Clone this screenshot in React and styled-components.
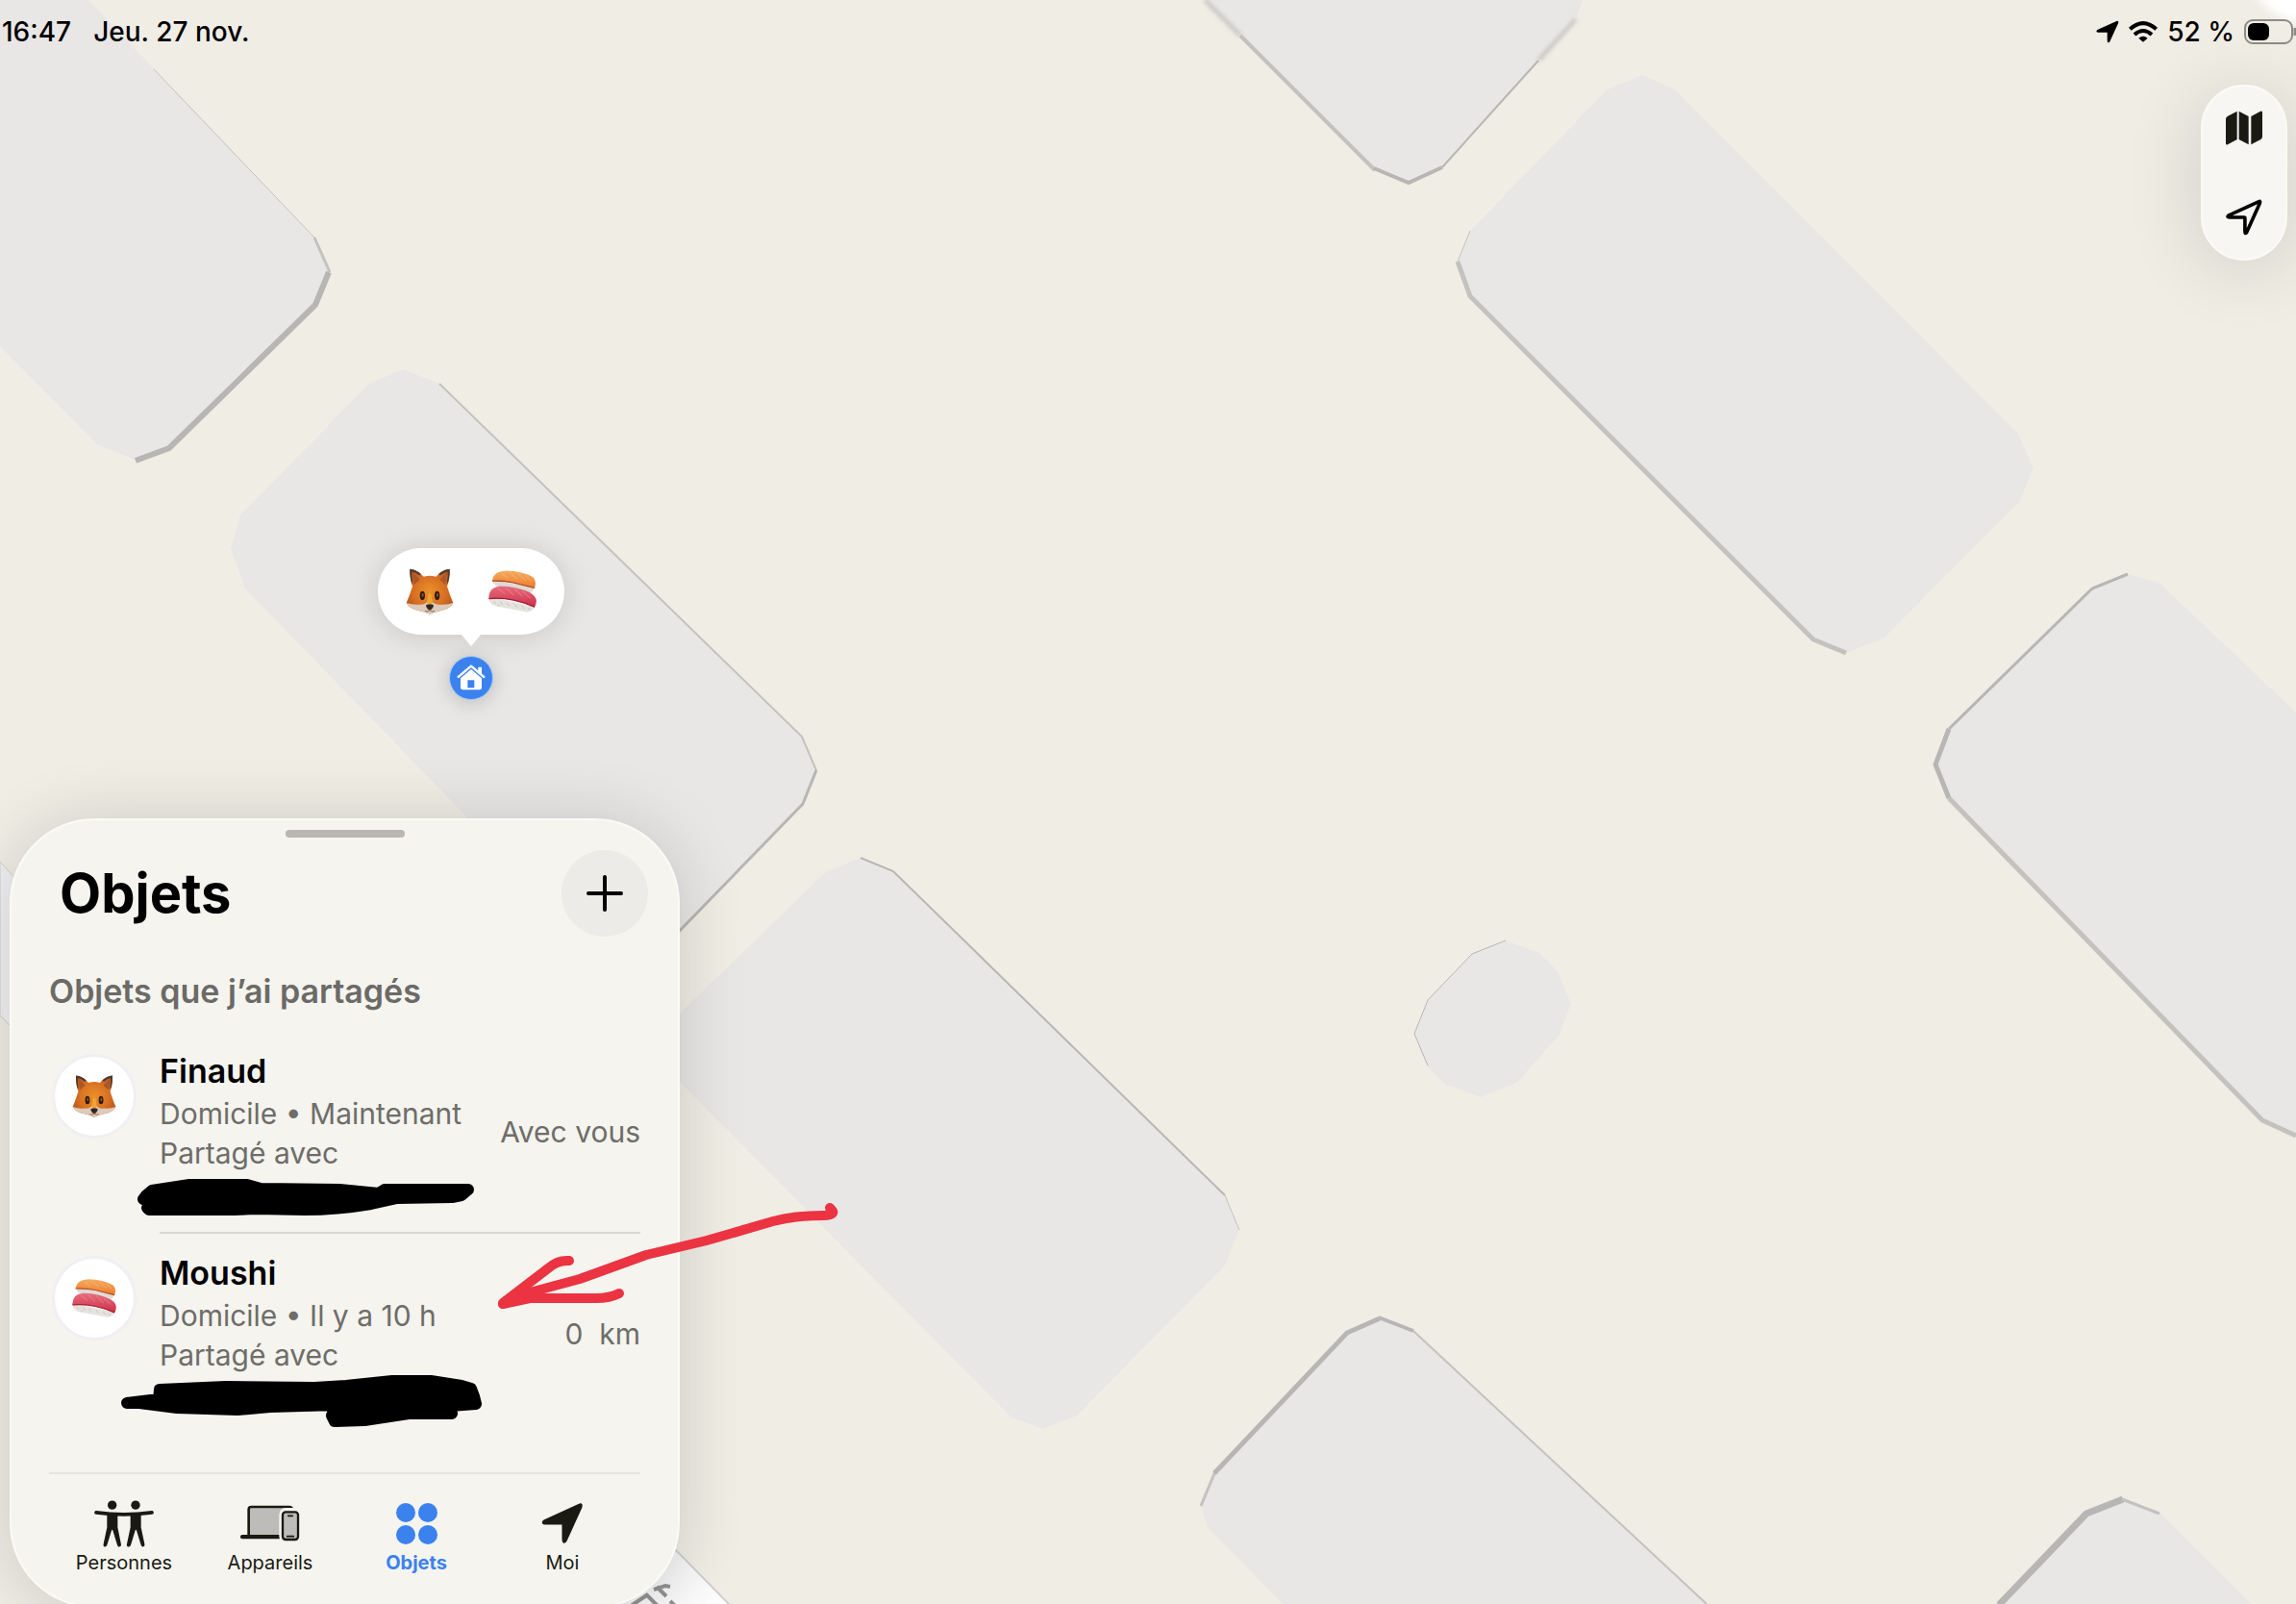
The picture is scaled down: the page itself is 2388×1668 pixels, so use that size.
import styled, { createGlobalStyle } from "styled-components"

const colors = {
    land: '#f0ede5',
    building: '#e8e7e6',
    sheet: '#f5f4ef',
    ink: '#1a1912',
    muted: '#6e6d69',
    blue: '#3b82ee',
    red: '#eb3342',
}

// each building: its footprint and the wall edges that show below the roof
const buildings = [
    {
        id: 'a',
        points: '0,0 92,0 327,247 343,285 328,316 176,465 142,479 102,463 0,360',
        walls: [
            { d: 'M160 72 L327 247', w: 1 },
            { d: 'M327 247 L343 283', w: 3 },
            { d: 'M342 283 L328 317 L176 466 L141 479', w: 6, dark: true },
        ],
    },
    {
        id: 'b',
        points: '419,384 457,399 834,766 849,801 834,837 660,1015 600,980 484,848 255,612 240,570 250,536 384,399',
        walls: [
            { d: 'M457 399 L834 766 L849 801', w: 2 },
            { d: 'M849 801 L835 836 L700 975', w: 3, dark: true },
        ],
    },
    {
        id: 'c',
        points: '895,892 929,906 1274,1243 1289,1279 1274,1316 1120,1472 1085,1486 1052,1474 690,1108 690,1070 860,906',
        walls: [
            { d: 'M895 892 L929 906 L1274 1243', w: 2, dark: true },
            { d: 'M1274 1243 L1289 1279', w: 1 },
        ],
    },
    {
        id: 'd',
        points: '1434,1370 1470,1384 1775,1668 1334,1668 1256,1588 1249,1566 1264,1530 1400,1385',
        walls: [
            { d: 'M1249 1566 L1264 1530', w: 3 },
            { d: 'M1263 1532 L1401 1386 L1435 1371', w: 5, dark: true },
            { d: 'M1434 1370 L1470 1384', w: 4, dark: true },
            { d: 'M1470 1384 L1775 1668', w: 2 },
        ],
    },
    {
        id: 'e',
        points: '1566,978 1601,991 1620,1010 1634,1044 1622,1076 1577,1126 1540,1141 1503,1127 1484,1108 1471,1075 1485,1040 1531,992',
        walls: [{ d: 'M1485 1108 L1471 1075 L1485 1040 L1531 992 L1566 978', w: 1, dark: true }],
    },
    {
        id: 'f',
        points: '1254,0 1430,175 1465,190 1500,173 1639,20 1646,0',
        walls: [
            { d: 'M1290 37 L1430 177', w: 4 },
            { d: 'M1429 175 L1465 190 L1500 174', w: 4, dark: true },
            { d: 'M1500 174 L1600 63', w: 2, dark: true },
        ],
        soft: 'M1253 0 L1290 37 M1600 63 L1639 20',
    },
    {
        id: 'g',
        points: '1708,78 1742,93 2099,451 2115,487 2100,522 1959,664 1920,679 1886,664 1529,307 1516,272 1529,240 1672,93',
        walls: [
            { d: 'M1529 240 L1516 272', w: 1 },
            { d: 'M1516 272 L1529 308 L1886 665 L1920 679', w: 5 },
        ],
    },
    {
        id: 'h',
        points: '2213,597 2246,606 2388,741 2388,1181 2353,1165 2027,830 2013,795 2027,758 2176,612',
        walls: [
            { d: 'M2213 597 L2176 612 L2027 758', w: 3, dark: true },
            { d: 'M2027 758 L2013 795 L2027 830', w: 5, dark: true },
            { d: 'M2027 830 L2353 1165 L2388 1181', w: 5 },
        ],
    },
    {
        id: 'i',
        points: '2207,1558 2246,1573 2341,1668 2079,1668 2169,1573',
        walls: [
            { d: 'M2079 1669 L2170 1574 L2208 1559', w: 7, dark: true },
            { d: 'M2207 1559 L2246 1574', w: 3 },
        ],
    },
]

const items = [
    { id: 1, name: 'Finaud', place: 'Domicile • Maintenant', shared: 'Partagé avec', distance: 'Avec vous', icon: 'fox' },
    { id: 2, name: 'Moushi', place: 'Domicile • Il y a 10 h', shared: 'Partagé avec', distance: '0  km', icon: 'sushi' },
]

const MapCanvas = () => (
    <Canvas viewBox="0 0 2388 1668" preserveAspectRatio="xMinYMin slice" aria-hidden="true">
        <defs>
            <linearGradient id="road" x1="0" y1="0" x2="1" y2="1">
                <stop offset="0" stopColor="#e4e4e7" />
                <stop offset="1" stopColor="#ffffff" />
            </linearGradient>
            <filter id="soft"><feGaussianBlur stdDeviation="4" /></filter>
            <filter id="softEdge"><feGaussianBlur stdDeviation="2" /></filter>
        </defs>
        <rect width="2388" height="1668" fill={colors.land} />
        {buildings.map(({ id, points, walls, soft }) => (
            <g key={id} fill="none" strokeLinejoin="miter">
                <polygon points={points} fill={colors.building} />
                {soft && <path d={soft} stroke="#c3c2bf" strokeWidth="4" filter="url(#softEdge)" />}
                {walls.map(({ d, w, dark }) => (
                    <path key={d} d={d} stroke={dark ? '#b7b6b4' : '#c3c2bf'} strokeWidth={w} />
                ))}
            </g>
        ))}
        <path d="M2344 -8 H2396 V24 Q2364 20 2344 -8Z" fill="#fff" filter="url(#soft)" />
        <path d="M0 896 L40 940 V1096 L0 1056Z" fill="#f1f1f3" stroke="#cfcfd0" />
        <path d="M640 1548 L760 1670 H600Z" fill="url(#road)" stroke="#cfcfd2" strokeWidth="2" />
        <g stroke="#929292" strokeWidth="4" fill="none">
            <path d="M656 1670 L674 1658" />
            <path d="M680 1653 L692 1649 L697 1650" />
            <path d="M672 1658 L684 1670" />
            <path d="M683 1650 L693 1660" />
            <path d="M697 1665 L702 1670" />
        </g>
    </Canvas>
)

const Fox = ({ size }) => (
    <svg width={size} height={size} viewBox="0 0 150 146" aria-hidden="true">
        <defs>
            <radialGradient id="fur" cx="50%" cy="50%" r="60%">
                <stop offset="0" stopColor="#ec9029" />
                <stop offset="0.6" stopColor="#d66f22" />
                <stop offset="1" stopColor="#b04f1a" />
            </radialGradient>
        </defs>
        <path d="M13 3 Q34 5 56 27 Q75 21 94 27 Q116 5 137 3 Q138 34 129 57 Q136 78 141 92 L148 109 Q140 126 112 132 Q92 136 75 144 Q58 136 38 132 Q10 126 2 109 L9 92 Q14 78 21 57 Q12 34 13 3Z" fill="url(#fur)" />
        <path d="M13 3 Q34 5 48 19 L42 23 Q30 12 19 11 Q17 25 21 39 L20 50 Q12 30 13 3Z" fill="#4a3a30" />
        <path d="M137 3 Q116 5 102 19 L108 23 Q120 12 131 11 Q133 25 129 39 L130 50 Q138 30 137 3Z" fill="#4a3a30" />
        <path d="M22 18 Q36 24 44 36 L26 52Z" fill="#a9562a" />
        <path d="M128 18 Q114 24 106 36 L124 52Z" fill="#a9562a" />
        <path d="M2 109 Q22 116 42 114 Q58 116 66 107 Q75 103 84 107 Q92 116 108 114 Q128 116 148 109 Q140 126 112 132 Q92 136 75 144 Q58 136 38 132 Q10 126 2 109Z" fill="#dccabb" />
        <path d="M66 107 L70 82 Q75 76 80 82 L84 107 L80 112 H70Z" fill="#eea532" />
        <ellipse cx="52" cy="86" rx="8" ry="14" fill="#33190d" />
        <ellipse cx="98" cy="86" rx="8" ry="14" fill="#33190d" />
        <ellipse cx="53" cy="84" rx="3" ry="6" fill="#7d5a46" />
        <ellipse cx="99" cy="84" rx="3" ry="6" fill="#7d5a46" />
        <path d="M63 116 Q75 110 87 116 Q86 128 75 132 Q64 128 63 116Z" fill="#372620" />
        <path d="M60 134 Q68 138 75 132 Q82 138 90 134" fill="none" stroke="#8a6b55" strokeWidth="3" />
    </svg>
)

const Sushi = ({ size }) => (
    <svg width={size} height={size} viewBox="0 -10 152 152" aria-hidden="true">
        <defs>
            <linearGradient id="salmon" x1="0" y1="0" x2="0" y2="1">
                <stop offset="0" stopColor="#f5aa60" />
                <stop offset="1" stopColor="#ea7d2c" />
            </linearGradient>
            <linearGradient id="tuna" x1="0" y1="0" x2="0" y2="1">
                <stop offset="0" stopColor="#e86c7c" />
                <stop offset="1" stopColor="#cb3049" />
            </linearGradient>
        </defs>
        <path d="M13 30 Q14 52 48 54 L125 72 Q142 70 145 54Z" fill="#dddbd5" />
        <path d="M12 30 Q18 2 56 1 Q108 2 142 22 Q153 34 146 55 Q112 46 78 38 Q42 32 12 34Z" fill="url(#salmon)" />
        <path d="M40 8 L62 25 M66 6 L92 27 M94 9 L118 32 M116 15 L136 34" stroke="#f8c088" strokeWidth="2" />
        <path d="M12 33 Q44 31 78 38 L146 55" fill="none" stroke="#b94a22" strokeWidth="4" />
        <path d="M3 84 Q-2 108 28 114 Q74 122 122 131 Q140 130 147 114Z" fill="#e4e3dd" />
        <path d="M1 86 Q2 52 38 49 Q92 50 132 70 Q155 84 151 102 Q149 113 145 116 Q116 102 80 94 Q42 86 1 90Z" fill="url(#tuna)" />
        <path d="M30 56 L52 74 M54 54 L80 78 M82 57 L108 82 M108 64 L132 88" stroke="#ef97a1" strokeWidth="2" />
        <path d="M2 89 Q42 85 80 94 Q116 102 146 115" fill="none" stroke="#a81f38" strokeWidth="4" />
        <path d="M16 98 L24 104 M38 98 L44 108 M58 102 L66 112 M82 106 L90 116 M106 112 L114 122 M30 108 L36 111 M126 118 L130 126" stroke="#c6c3ba" strokeWidth="3" />
    </svg>
)

const Emoji = ({ name, size }) => name === 'fox' ? <Fox size={size} /> : <Sushi size={size} />

const HomeIcon = () => (
    <svg width="30" height="28" viewBox="0 0 90 84" aria-hidden="true">
        <path d="M5 39 L45 5 L85 39" fill="none" stroke="#fff" strokeWidth="7" strokeLinecap="round" strokeLinejoin="round" />
        <path d="M67 8 H78 V32 L67 23Z" fill="#fff" />
        <path fillRule="evenodd" d="M45 15 L78 43 V72 Q78 79 71 79 H19 Q12 79 12 72 V43Z M34 49 V73 H55 V49Z" fill="#fff" />
    </svg>
)

const LocationIcon = ({ size, outline }) => (
    <svg width={size} height={size} viewBox="0 0 42 42" aria-hidden="true">
        <path
            d="M3 19 L38 3 Q40 2 39 5 L24 38 Q22 41 22 37 V22 Q22 21 21 21 H4 Q1 21 3 19Z"
            fill={outline ? 'none' : 'currentColor'}
            stroke="currentColor"
            strokeWidth={outline ? 4 : 3}
            strokeLinejoin="round"
        />
    </svg>
)

const WifiIcon = () => (
    <svg width="30" height="22" viewBox="0 0 90 66" aria-hidden="true">
        <path d="M4 25 Q45 -12 86 25" fill="none" stroke="#000" strokeWidth="12" />
        <path d="M18 42 Q45 18 72 42" fill="none" stroke="#000" strokeWidth="12" />
        <path d="M31 53 Q45 41 59 53 L45 65Z" fill="#000" />
    </svg>
)

const BatteryIcon = () => (
    <svg width="54" height="26" viewBox="0 0 54 26" aria-hidden="true">
        <rect x="1" y="1" width="49" height="24" rx="8" fill="none" stroke="#8c8b88" strokeWidth="2" />
        <rect x="4" y="4" width="22" height="18" rx="6" fill="#000" />
        <path d="M53 9 V17" stroke="#8c8b88" strokeWidth="3" />
    </svg>
)

const MapIcon = () => (
    <svg width="38" height="36" viewBox="0 0 114 106" fill={colors.ink} aria-hidden="true">
        <path d="M5 17 L35 1 V89 L6 105 Q0 107 0 101 V25 Q0 20 5 17Z" />
        <path d="M41 1 L71 17 V105 L41 89Z" />
        <path d="M79 17 L108 1 Q114 -1 114 5 V80 Q114 86 109 89 L79 105Z" />
    </svg>
)

const PeopleIcon = () => (
    <svg width="62" height="49" viewBox="0 0 186 146" fill={colors.ink} aria-hidden="true">
        <circle cx="56" cy="15" r="14" />
        <circle cx="129" cy="15" r="14" />
        <path d="M6 38 Q50 44 92 44 Q136 44 180 38" fill="none" stroke={colors.ink} strokeWidth="11" strokeLinecap="round" />
        <path d="M40 43 H73 V84 L84 138 Q84 146 76 145 Q73 144 72 140 L58 94 Q56 90 54 94 L40 140 Q38 146 32 145 Q27 143 29 136 L40 84Z" />
        <path d="M113 43 H146 V84 L157 136 Q159 143 153 145 Q148 146 146 140 L132 94 Q130 90 128 94 L114 140 Q112 146 106 145 Q100 144 102 136 L113 84Z" />
    </svg>
)

const DevicesIcon = () => (
    <svg width="62" height="38" viewBox="0 0 186 114" aria-hidden="true">
        <path d="M26 98 V14 Q26 6 34 6 H151 Q159 6 160 14 V98Z" fill="#bdbcb8" />
        <path d="M26 98 V14 Q26 6 34 6 H153 Q160 6 162 12" fill="none" stroke={colors.ink} strokeWidth="8" />
        <rect x="0" y="93" width="130" height="13" rx="6" fill={colors.ink} />
        <rect x="132" y="20" width="48" height="88" rx="10" fill="#bdbcb8" stroke={colors.sheet} strokeWidth="22" />
        <rect x="132" y="22" width="48" height="86" rx="9" fill="#bdbcb8" stroke={colors.ink} strokeWidth="7" />
        <path d="M149 34 H163 M146 98 H166" stroke={colors.ink} strokeWidth="5" strokeLinecap="round" />
    </svg>
)

const ItemsIcon = () => (
    <svg width="43" height="43" viewBox="0 0 43 43" fill={colors.blue} aria-hidden="true">
        <circle cx="10" cy="10" r="10" />
        <circle cx="33" cy="10" r="10" />
        <circle cx="10" cy="33" r="10" />
        <circle cx="33" cy="33" r="10" />
    </svg>
)

const PlusIcon = () => (
    <svg width="38" height="38" viewBox="0 0 38 38" aria-hidden="true">
        <path d="M19 2 V36 M2 19 H36" stroke="#000" strokeWidth="4" strokeLinecap="round" />
    </svg>
)

const tabs = [
    { id: 'people', title: 'Personnes', icon: <PeopleIcon /> },
    { id: 'devices', title: 'Appareils', icon: <DevicesIcon /> },
    { id: 'items', title: 'Objets', icon: <ItemsIcon />, active: true },
    { id: 'me', title: 'Moi', icon: <LocationIcon size={44} /> },
]

// hand-drawn markup that sits above everything
const Ink = () => (
    <InkLayer viewBox="0 0 2388 1668" preserveAspectRatio="xMinYMin slice" aria-hidden="true">
        <g stroke="#000" strokeWidth="12" strokeLinejoin="round">
            <path d="M158 1238 L197 1232 H257 L271 1236 L353 1237 L394 1241 L400 1237 H487 L480 1243 L470 1245 L413 1246 L386 1252 Q350 1258 317 1258 L266 1257 L243 1258 H155 L153 1256 L158 1250 L149 1247 L152 1243Z" />
            <path d="M132 1459 L165 1455 L166 1445 L235 1442 L327 1443 L360 1441 L408 1436 H448 L480 1441 L490 1444 L493 1452 L495 1460 L468 1462 L470 1470 H425 L379 1477 L348 1478 L345 1472 L350 1461 L281 1463 L247 1466 L184 1464 L145 1459Z" />
        </g>
        <g fill="none" stroke={colors.red} strokeWidth="10" strokeLinecap="round" strokeLinejoin="round">
            <path d="M863 1256 Q872 1264 856 1264 Q826 1264 804 1270 L735 1290 L672 1305 L603 1330 L551 1344 L523 1356" />
            <path d="M592 1311 Q580 1310 570 1319 L523 1355" />
            <path d="M644 1345 Q634 1350 620 1350 H551 L523 1356" />
        </g>
    </InkLayer>
)

const App = () => {
    return (
        <Screen>
            <GlobalStyle />
            <MapCanvas />
            <StatusBar>
                <StatusGroup $gap="23px">
                    <span>16:47</span>
                    <span>Jeu. 27 nov.</span>
                </StatusGroup>
                <StatusGroup $gap="10px">
                    <LocationIcon size={24} />
                    <WifiIcon />
                    <span>52 %</span>
                    <BatteryIcon />
                </StatusGroup>
            </StatusBar>
            <Pin>
                <Callout>
                    <Emoji name="fox" size={50} />
                    <Emoji name="sushi" size={50} />
                </Callout>
                <Tail />
                <HomeDot><HomeIcon /></HomeDot>
            </Pin>
            <Main>
                <Sheet>
                    <Handle />
                    <SheetHeader>
                        <h1>Objets</h1>
                        <AddButton type="button" aria-label="Ajouter"><PlusIcon /></AddButton>
                    </SheetHeader>
                    <SectionTitle>Objets que j’ai partagés</SectionTitle>
                    <List>
                        {items.map((item) => {
                            const { id, name, place, shared, distance, icon } = item;
                            return <Row key={id}>
                                <Avatar><Emoji name={icon} size={46} /></Avatar>
                                <RowBody>
                                    <Details>
                                        <h3>{name}</h3>
                                        <p>{place}</p>
                                        <p>{shared}</p>
                                    </Details>
                                    <Distance>{distance}</Distance>
                                </RowBody>
                            </Row>
                        })}
                    </List>
                    <TabBar>
                        {tabs.map(({ id, title, icon, active }) => (
                            <Tab key={id} href={`#${id}`} $active={active}>
                                <span className="icon">{icon}</span>
                                {title}
                            </Tab>
                        ))}
                    </TabBar>
                </Sheet>
                <Controls>
                    <button type="button" aria-label="Plan"><MapIcon /></button>
                    <button type="button" aria-label="Ma position"><LocationIcon size={38} outline /></button>
                </Controls>
            </Main>
            <Ink />
        </Screen>
    )
}

const GlobalStyle = createGlobalStyle`
    *{
        box-sizing: border-box;
        margin: 0;
        padding: 0;
    }
    body{
        font-family: Inter, "Liberation Sans", sans-serif;
        background-color: ${colors.land};
        color: #000;
    }
    svg{
        display: block;
        flex-shrink: 0;
    }
    button{
        border: none;
        background: none;
        cursor: pointer;
    }
`
const Screen = styled.div`
    position: relative;
    height: 100vh;
    display: flex;
    flex-direction: column;
    overflow: hidden;
`
const Canvas = styled.svg`
    position: absolute;
    inset: 0;
    width: 100%;
    height: 100%;
`
const InkLayer = styled(Canvas)`
    z-index: 3;
    pointer-events: none;
`
const StatusBar = styled.header`
    position: relative;
    display: flex;
    justify-content: space-between;
    align-items: center;
    height: 66px;
    padding-left: 2px;
    font-size: 28px;
    font-weight: 500;
`
const StatusGroup = styled.div`
    display: flex;
    align-items: center;
    gap: ${({ $gap }) => $gap};
`
const Main = styled.main`
    position: relative;
    flex: 1;
    min-height: 0;
    display: flex;
    justify-content: space-between;
    align-items: flex-start;
    padding: 22px 9px 0 10px;
`
const Controls = styled.div`
    width: 90px;
    display: flex;
    flex-direction: column;
    gap: 7px;
    border-radius: 45px;
    background-color: #f7f6f2;
    border: 2px solid #fbfaf5;
    box-shadow: 0 8px 80px rgba(0, 0, 0, 0.14);
    button{
        height: 86px;
        display: flex;
        align-items: center;
        justify-content: center;
        color: #000;
    }
`
const Pin = styled.div`
    position: absolute;
    left: 393px;
    top: 570px;
    display: flex;
    flex-direction: column;
    align-items: center;
`
const Callout = styled.div`
    display: flex;
    align-items: center;
    justify-content: center;
    gap: 36px;
    width: 194px;
    height: 90px;
    border-radius: 45px;
    background-color: #fff;
    box-shadow: 0 2px 30px rgba(0, 0, 0, 0.14);
`
const Tail = styled.div`
    width: 20px;
    height: 12px;
    background-color: #fff;
    clip-path: polygon(0 0, 100% 0, 50% 100%);
`
const HomeDot = styled.div`
    display: flex;
    align-items: center;
    justify-content: center;
    width: 46px;
    height: 46px;
    margin-top: 10px;
    border-radius: 50%;
    background-color: ${colors.blue};
    border: 1px solid #a4cdf8;
    box-shadow: 0 2px 20px rgba(0, 0, 0, 0.2);
`
const Sheet = styled.section`
    align-self: flex-end;
    width: 697px;
    max-width: 100%;
    margin-bottom: -4px;
    padding: 10px 0 33px;
    border-radius: 88px;
    background-color: ${colors.sheet};
    border: 2px solid #fbfaf6;
    box-shadow: 0 4px 70px rgba(0, 0, 0, 0.16);
`
const Handle = styled.div`
    width: 124px;
    height: 8px;
    margin: 0 auto;
    border-radius: 4px;
    background-color: #bab7b3;
`
const SheetHeader = styled.div`
    display: flex;
    align-items: center;
    justify-content: space-between;
    margin-top: 13px;
    padding: 0 31px 0 50px;
    h1{
        font-size: 56px;
        line-height: 68px;
        font-weight: 700;
    }
`
const AddButton = styled.button`
    display: flex;
    align-items: center;
    justify-content: center;
    width: 90px;
    height: 90px;
    border-radius: 50%;
    background-color: #ecebe8;
`
const SectionTitle = styled.h2`
    margin-top: 35px;
    padding-left: 39px;
    font-size: 34px;
    line-height: 44px;
    font-weight: 600;
    color: #6b6a66;
`
const List = styled.ul`
    list-style: none;
    margin-top: 20px;
    padding: 0 39px 0 42px;
`
const Row = styled.li`
    display: flex;
    gap: 24px;
    &:last-child > :last-child{
        border-color: transparent;
    }
`
const Avatar = styled.div`
    display: flex;
    align-items: center;
    justify-content: center;
    width: 88px;
    height: 88px;
    margin-top: 23px;
    border-radius: 50%;
    background-color: #fff;
    border: 3px solid #f0eff3;
`
const RowBody = styled.div`
    flex: 1;
    display: flex;
    align-items: center;
    justify-content: space-between;
    height: 210px;
    border-bottom: 2px solid #d9d8d4;
`
const Details = styled.div`
    height: 168px;
    h3{
        font-size: 34px;
        line-height: 42px;
        font-weight: 600;
        margin-bottom: 3px;
    }
    p{
        font-size: 30px;
        line-height: 41px;
        color: ${colors.muted};
    }
`
const Distance = styled.span`
    font-size: 30px;
    line-height: 41px;
    color: ${colors.muted};
    white-space: pre;
`
const TabBar = styled.nav`
    display: flex;
    justify-content: center;
    margin: 38px 39px 0;
    padding: 26px 3px 0 0;
    border-top: 2px solid #e5e4df;
`
const Tab = styled.a`
    flex: 0 1 152px;
    display: flex;
    flex-direction: column;
    align-items: center;
    gap: 4px;
    font-size: 20px;
    line-height: 24px;
    font-weight: ${({ $active }) => $active ? 700 : 400};
    color: ${({ $active }) => $active ? colors.blue : colors.ink};
    text-decoration: none;
    .icon{
        height: 50px;
        display: flex;
        align-items: center;
    }
`
export default App
